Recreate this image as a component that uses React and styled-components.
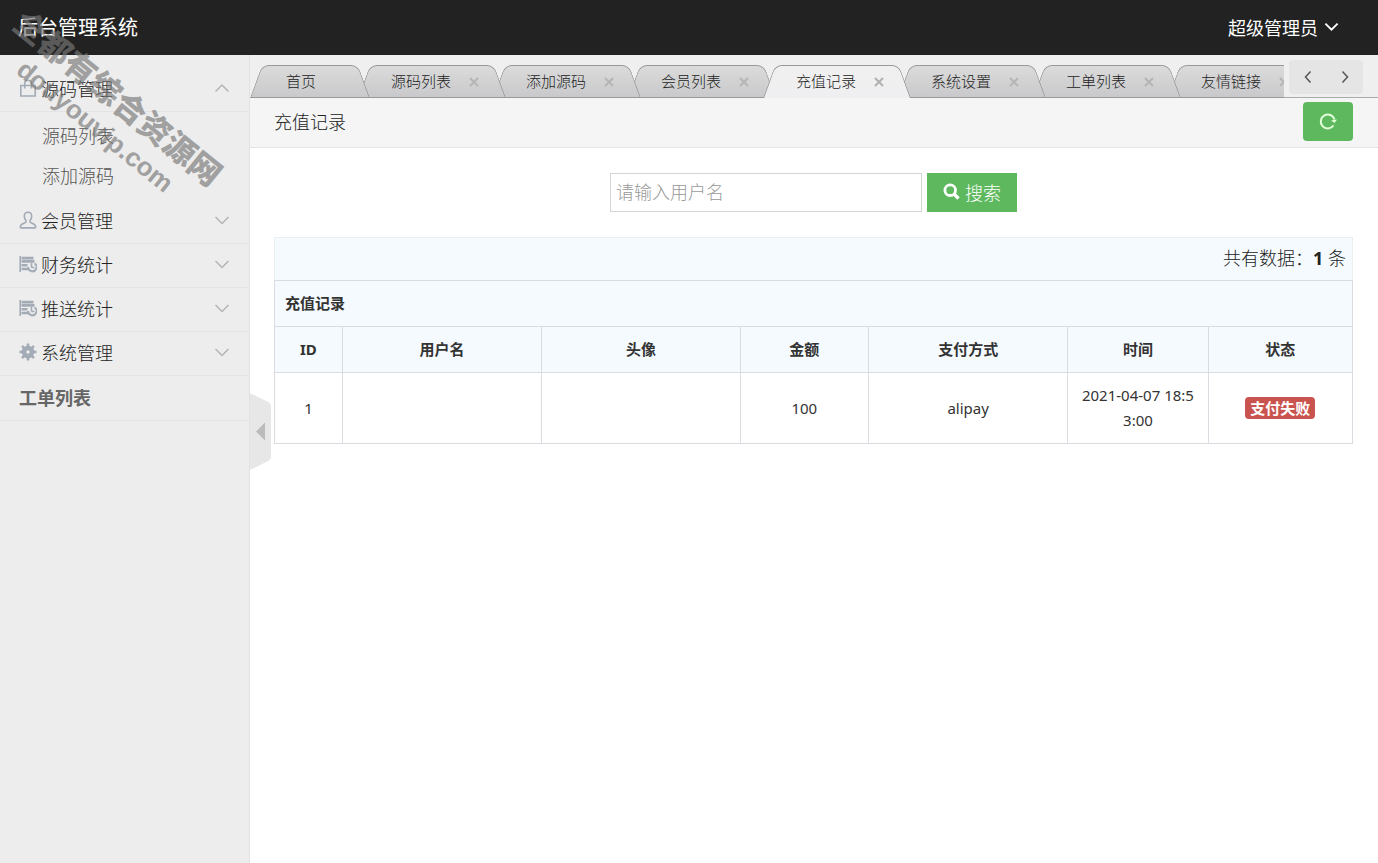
import React from 'react';
import styled, {createGlobalStyle, css} from 'styled-components';

const menus = [
    {title: '源码管理', icon: 'bag', open: true, items: ['源码列表', '添加源码']},
    {title: '会员管理', icon: 'user'},
    {title: '财务统计', icon: 'stats'},
    {title: '推送统计', icon: 'stats'},
    {title: '系统管理', icon: 'gear'},
];

const tabs = [
    {title: '首页', home: true},
    {title: '源码列表'},
    {title: '添加源码'},
    {title: '会员列表'},
    {title: '充值记录', active: true},
    {title: '系统设置'},
    {title: '工单列表'},
    {title: '友情链接'},
];

const columns = [
    {name: 'ID', width: '6.3%'},
    {name: '用户名', width: '18.5%'},
    {name: '头像', width: '18.4%'},
    {name: '金额', width: '11.9%'},
    {name: '支付方式', width: '18.5%'},
    {name: '时间', width: '13%'},
    {name: '状态', width: '13.4%'},
];

const records = [
    {id: 1, user: '', avatar: '', amount: 100, pay: 'alipay', time: '2021-04-07 18:53:00', status: '支付失败'},
];

function Chevron({dir = 'down', size = 16, width = 1.5}) {
    const paths = {
        down: 'M1.5 5l6.5 6.5L14.5 5',
        up: 'M1.5 11.5L8 5l6.5 6.5',
        left: 'M10.5 2.5L5.5 8l5 5.5',
        right: 'M5.5 2.5l5 5.5-5 5.5',
    };
    return (
        <svg width={size} height={size} viewBox="0 0 16 16" fill="none" stroke="currentColor" strokeWidth={width} aria-hidden="true">
            <path d={paths[dir]} />
        </svg>
    );
}

function MenuIcon({name}) {
    return (
        <svg width="18" height="18" viewBox="0 0 18 18" fill="none" stroke="currentColor" strokeWidth="1.6" aria-hidden="true">
            {name === 'bag' && (
                <>
                    <path d="M1.800 6.500h14.400v10.500H1.800z" />
                    <path d="M5.700 9.500V4.500a3.300 3.300 0 0 1 6.600 0v5" />
                </>
            )}
            {name === 'user' && (
                <path d="M9 1.200c-2.400 0-3.700 1.700-3.700 4 0 2 .7 3.300 1.700 4.300v1.500c-.4 1-5.500 1.500-5.800 4.700 0 .8.4 1.200 1.200 1.200h13.200c.8 0 1.200-.4 1.200-1.200-.3-3.200-5.400-3.700-5.800-4.700V9.500c1-1 1.700-2.300 1.700-4.300C12.700 2.900 11.400 1.200 9 1.200z" />
            )}
            {name === 'stats' && (
                <>
                    <path d="M1.200 1v16" />
                    <path d="M2.500 3.200h12M2.500 6.300h13" strokeWidth="2.800" />
                    <path d="M2.500 10.300h6M2.500 14h6.500" strokeWidth="2.400" />
                    <path d="M15.500 8.500a4.200 4.200 0 1 1-6.300 3.500" strokeWidth="2" />
                    <path d="M12.500 12.500V8M12.500 12.500h3" />
                </>
            )}
            {name === 'gear' && (
                <>
                    <circle cx="9" cy="9" r="4" strokeWidth="4.600" />
                    <path
                        d="M9 .5v3M9 14.500v3M.5 9h3M14.500 9h3M3 3l2.200 2.200M12.800 12.800L15 15M3 15l2.200-2.200M12.800 5.200L15 3"
                        strokeWidth="2.600"
                    />
                </>
            )}
        </svg>
    );
}

function App() {
    return (
        <>
            <GlobalStyle />
            <PageStyled lang="zh-CN">
                <Header>
                    <Logo>后台管理系统</Logo>
                    <AdminButton type="button">
                        超级管理员
                        <Chevron size={15} width={2} />
                    </AdminButton>
                </Header>
                <Body>
                    <Sidebar>
                        {menus.map((menu) => (
                            <React.Fragment key={menu.title}>
                                <MenuButton type="button" aria-expanded={!!menu.open}>
                                    <MenuIcon name={menu.icon} />
                                    <span>{menu.title}</span>
                                    <Chevron dir={menu.open ? 'up' : 'down'} />
                                </MenuButton>
                                {menu.items && (
                                    <SubMenu>
                                        {menu.items.map((item) => (
                                            <li key={item}><a href="#">{item}</a></li>
                                        ))}
                                    </SubMenu>
                                )}
                            </React.Fragment>
                        ))}
                        <MenuLink href="#">工单列表</MenuLink>
                        <CollapseButton type="button" aria-label="收起" />
                    </Sidebar>
                    <Main>
                        <TabBar>
                            <TabList>
                                {tabs.map((tab, i) => (
                                    <Tab key={tab.title} $home={tab.home} $active={tab.active} $order={tabs.length - i}>
                                        <a href="#">{tab.title}</a>
                                        {!tab.home && (
                                            <CloseButton type="button" aria-label="关闭" $active={tab.active}>
                                                <svg width="10" height="10" viewBox="0 0 10 10" stroke="currentColor" strokeWidth="2">
                                                    <path d="M1 1l8 8M9 1L1 9" />
                                                </svg>
                                            </CloseButton>
                                        )}
                                    </Tab>
                                ))}
                            </TabList>
                            <TabArrows>
                                <button type="button" aria-label="向左"><Chevron dir="left" /></button>
                                <button type="button" aria-label="向右"><Chevron dir="right" /></button>
                            </TabArrows>
                        </TabBar>
                        <Breadcrumb>
                            <span>充值记录</span>
                            <RefreshButton type="button" aria-label="刷新">
                                <svg width="18" height="18" viewBox="0 0 18 18" fill="none" stroke="currentColor" strokeWidth="2">
                                    <path d="M14.500 13.500A7 7 0 1 1 15.500 7.500" />
                                    <path d="M18 7.500l-2.500 3.500-3.500-2.500z" fill="currentColor" stroke="none" />
                                </svg>
                            </RefreshButton>
                        </Breadcrumb>
                        <Content>
                            <SearchForm onSubmit={(e) => e.preventDefault()}>
                                <input type="text" aria-label="用户名" placeholder="请输入用户名" />
                                <button type="submit">
                                    <svg width="17" height="17" viewBox="0 0 17 17" fill="none" stroke="currentColor" aria-hidden="true">
                                        <circle cx="7.200" cy="7.200" r="5.300" strokeWidth="2.800" />
                                        <path d="M11 11l4.500 4.500" strokeWidth="3.400" />
                                    </svg>
                                    搜索
                                </button>
                            </SearchForm>
                            <Summary>
                                共有数据：<strong>1</strong> 条
                            </Summary>
                            <RecordTable>
                                <colgroup>
                                    {columns.map((col) => <Col key={col.name} $width={col.width} />)}
                                </colgroup>
                                <thead>
                                    <tr>
                                        <TitleCell colSpan={columns.length}>充值记录</TitleCell>
                                    </tr>
                                    <tr>
                                        {columns.map((col) => <th key={col.name}>{col.name}</th>)}
                                    </tr>
                                </thead>
                                <tbody>
                                    {records.map((row) => (
                                        <tr key={row.id}>
                                            <td>{row.id}</td>
                                            <td>{row.user}</td>
                                            <td>{row.avatar}</td>
                                            <td>{row.amount}</td>
                                            <td>{row.pay}</td>
                                            <td>{row.time}</td>
                                            <td><Label>{row.status}</Label></td>
                                        </tr>
                                    ))}
                                </tbody>
                            </RecordTable>
                        </Content>
                    </Main>
                </Body>
                <Watermark>
                    <strong>全都有综合资源网</strong>
                    <span>douyouvip.com</span>
                </Watermark>
            </PageStyled>
        </>
    );
}

const regularFont = '"Noto Sans", "Noto Sans CJK SC", sans-serif';

const GlobalStyle = createGlobalStyle`
    * {
        box-sizing: border-box;
    }
    body {
        margin: 0;
        background: #fff;
        color: #222;
        font-family: "Noto Sans", "Noto Sans CJK SC Light", "Noto Sans CJK SC", sans-serif;
        font-size: 18px;
    }
    button, input {
        font: inherit;
    }
    strong, th {
        font-family: ${regularFont};
    }
    button {
        border: 0;
        padding: 0;
        background: none;
        color: inherit;
        cursor: pointer;
    }
    a {
        color: inherit;
        text-decoration: none;
    }
    ul {
        list-style: none;
        margin: 0;
        padding: 0;
    }
`;

const PageStyled = styled.div`
    position: relative;
    display: flex;
    flex-direction: column;
    min-height: 100vh;
    overflow: hidden;
`;

const Header = styled.header`
    display: flex;
    align-items: center;
    justify-content: space-between;
    height: 55px;
    padding: 0 39px 2px 18px;
    background: #222;
    color: #fff;
    font-family: ${regularFont};
`;

const Logo = styled.div`
    font-size: 20px;
`;

const AdminButton = styled.button`
    display: flex;
    align-items: center;
    gap: 6px;
`;

const Body = styled.div`
    display: flex;
    flex: 1;
`;

const Sidebar = styled.nav`
    width: 250px;
    flex-shrink: 0;
    padding-top: 13px;
    background: #ededed;
    border-right: 1px solid #e2e2e2;
`;

const menuRow = css`
    display: flex;
    align-items: center;
    width: 100%;
    height: 44px;
    padding: 0 19px 3px;
    border-bottom: 1px solid #e3e3e3;
`;

const MenuButton = styled.button`
    ${menuRow}
    gap: 4px;
    text-align: left;

    span {
        flex: 1;
    }
    svg {
        color: #a3abb6;
    }
    svg:last-child {
        color: #b5b5b5;
    }
`;

const MenuLink = styled.a`
    ${menuRow}
    height: 45px;
    color: #666;
    font-family: ${regularFont};
    font-weight: 700;
`;

const SubMenu = styled.ul`
    padding: 4px 0;
    color: #555;

    li {
        padding-left: 42px;
        line-height: 40px;
    }
`;

/* handle that hangs over the content, centred on the window */
const CollapseButton = styled.button`
    position: absolute;
    top: 50%;
    left: 250px;
    z-index: 20;
    width: 21px;
    height: 77px;
    transform: translateY(-50%);
    background: #e7e7e7;
    clip-path: polygon(0 0, 90% 12%, 100% 16%, 100% 84%, 90% 88%, 0 100%);

    &::before {
        content: '';
        display: block;
        width: 0;
        margin-left: 6px;
        border: 9px solid transparent;
        border-left: 0;
        border-right-color: #bbb;
    }
`;

const Main = styled.main`
    flex: 1;
    min-width: 0;
`;

const TabBar = styled.div`
    display: flex;
    height: 43px;
    padding-right: 15px;
    background: #efeff0;
    box-shadow: inset 0 -1px #aaa;
`;

const TabList = styled.ul`
    display: flex;
    flex: 1;
    min-width: 0;
    padding-top: 10px;
    overflow: hidden;
`;

const Tab = styled.li`
    position: relative;
    z-index: ${(props) => (props.$active ? 10 : props.$order)};
    display: flex;
    flex-shrink: 0;
    align-items: center;
    justify-content: space-between;
    width: ${(props) => (props.$home ? '120px' : '147px')};
    height: 33px;
    margin-right: -12px;
    padding: 0 35px 2px ${(props) => (props.$home ? '36px' : '33px')};
    font-size: 15px;

    &::before, &::after {
        content: '';
        position: absolute;
        z-index: -1;
        top: 0;
        bottom: 0;
        width: 50%;
        border: 0 solid #999;
        border-top-width: 1px;
        border-bottom-width: ${(props) => (props.$active ? 0 : '1px')};
        background: ${(props) => (props.$active ? 'linear-gradient(#f0f0f0, #efeff1)' : 'linear-gradient(#dbdbdb, #c9c9cb)')};
    }
    &::before {
        left: 0;
        border-left-width: 1px;
        border-top-left-radius: 7px;
        transform: skewX(-20deg);
        transform-origin: bottom;
    }
    &::after {
        right: 0;
        border-right-width: 1px;
        border-top-right-radius: 7px;
        transform: skewX(20deg);
        transform-origin: bottom;
    }
`;

const CloseButton = styled.button`
    display: flex;
    color: ${(props) => (props.$active ? '#b0b0b0' : '#b5b5b5')};
    margin-right: -13px;
    padding: 5px 4px 3px;
`;

const TabArrows = styled.div`
    display: flex;
    width: 74px;
    height: 34px;
    margin: 5px 0 0 5px;
    background: #e5e5e5;
    border-radius: 4px;
    color: #555;

    button {
        display: flex;
        flex: 1;
        align-items: center;
        justify-content: center;
    }
`;

const Breadcrumb = styled.div`
    display: flex;
    align-items: center;
    justify-content: space-between;
    height: 50px;
    padding: 0 25px 3px 24px;
    background: #f5f5f5;
    border-bottom: 1px solid #e5e5e5;
`;

const RefreshButton = styled.button`
    display: flex;
    align-items: center;
    justify-content: center;
    width: 50px;
    height: 39px;
    background: #5eb95e;
    border-radius: 4px;
    color: #e2ffd9;
`;

const Content = styled.div`
    padding: 25px 25px 25px 24px;
`;

const SearchForm = styled.form`
    display: flex;
    justify-content: center;
    gap: 5px;
    margin-bottom: 25px;

    input {
        width: 312px;
        height: 39px;
        padding: 0 5px 2px;
        border: 1px solid #d5d5d5;
        background: #fff;
        color: #333;
    }
    input::placeholder {
        color: #999;
    }
    button {
        display: flex;
        align-items: center;
        justify-content: center;
        gap: 5px;
        width: 90px;
        height: 39px;
        padding-bottom: 2px;
        background: #5eb95e;
        color: #fff;
    }
`;

const Summary = styled.div`
    height: 43px;
    padding-right: 6px;
    background: #f5fafe;
    border: 1px solid #eaeff2;
    border-bottom: 0;
    line-height: 40px;
    text-align: right;
`;

const RecordTable = styled.table`
    width: 100%;
    table-layout: fixed;
    border-collapse: collapse;
    color: #333;
    font-size: 15px;
    line-height: 25px;
    text-align: center;

    th, td {
        padding: 10px;
        border: 1px solid #d9dde1;
        word-break: break-all;
    }
    th {
        background: #f5fafe;
    }
`;

const Col = styled.col`
    width: ${(props) => props.$width};
`;

const TitleCell = styled.th`
    text-align: left;
`;

const Label = styled.span`
    display: inline-block;
    padding: 0 5px;
    background: #c9534f;
    border-radius: 4px;
    color: #fff;
    font-family: ${regularFont};
    font-weight: 700;
    line-height: 22px;
`;

/* site stamp laid diagonally over the top left corner */
const Watermark = styled.div`
    position: absolute;
    z-index: 30;
    top: 78px;
    left: -24px;
    display: flex;
    flex-direction: column;
    align-items: center;
    width: 260px;
    color: #787878;
    opacity: 0.65;
    font-family: "Liberation Sans", "Noto Sans CJK SC", sans-serif;
    font-size: 26px;
    font-weight: 700;
    line-height: 35px;
    white-space: nowrap;
    transform: rotate(39deg);
    pointer-events: none;

    strong {
        font-family: inherit;
        font-size: 32px;
        font-weight: 900;
    }
`;

export default App;
